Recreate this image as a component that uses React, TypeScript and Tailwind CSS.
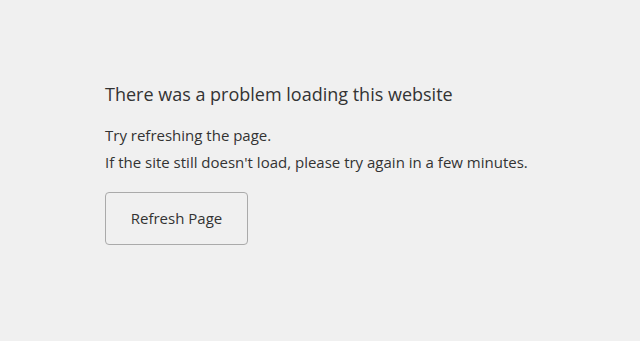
export default function App() {
  return (
    <div className="min-h-screen w-full bg-[#f0f0f0] text-[#333] font-['Open_Sans',sans-serif]">
      <div className="pl-[105px] pt-[80px]">
        <h1 className="text-[18px] leading-[28px] font-normal">There was a problem loading this website</h1>
        <p className="mt-[14px] text-[15px] leading-[27px]">Try refreshing the page.</p>
        <p className="text-[15px] leading-[27px]">If the site still doesn't load, please try again in a few minutes.</p>
        <button className="mt-[16px] w-[143px] h-[53px] border border-[#aaa] rounded-[4px] text-[15px] text-[#333] bg-[#f0f0f0]">
          Refresh Page
        </button>
      </div>
    </div>
  );
}
